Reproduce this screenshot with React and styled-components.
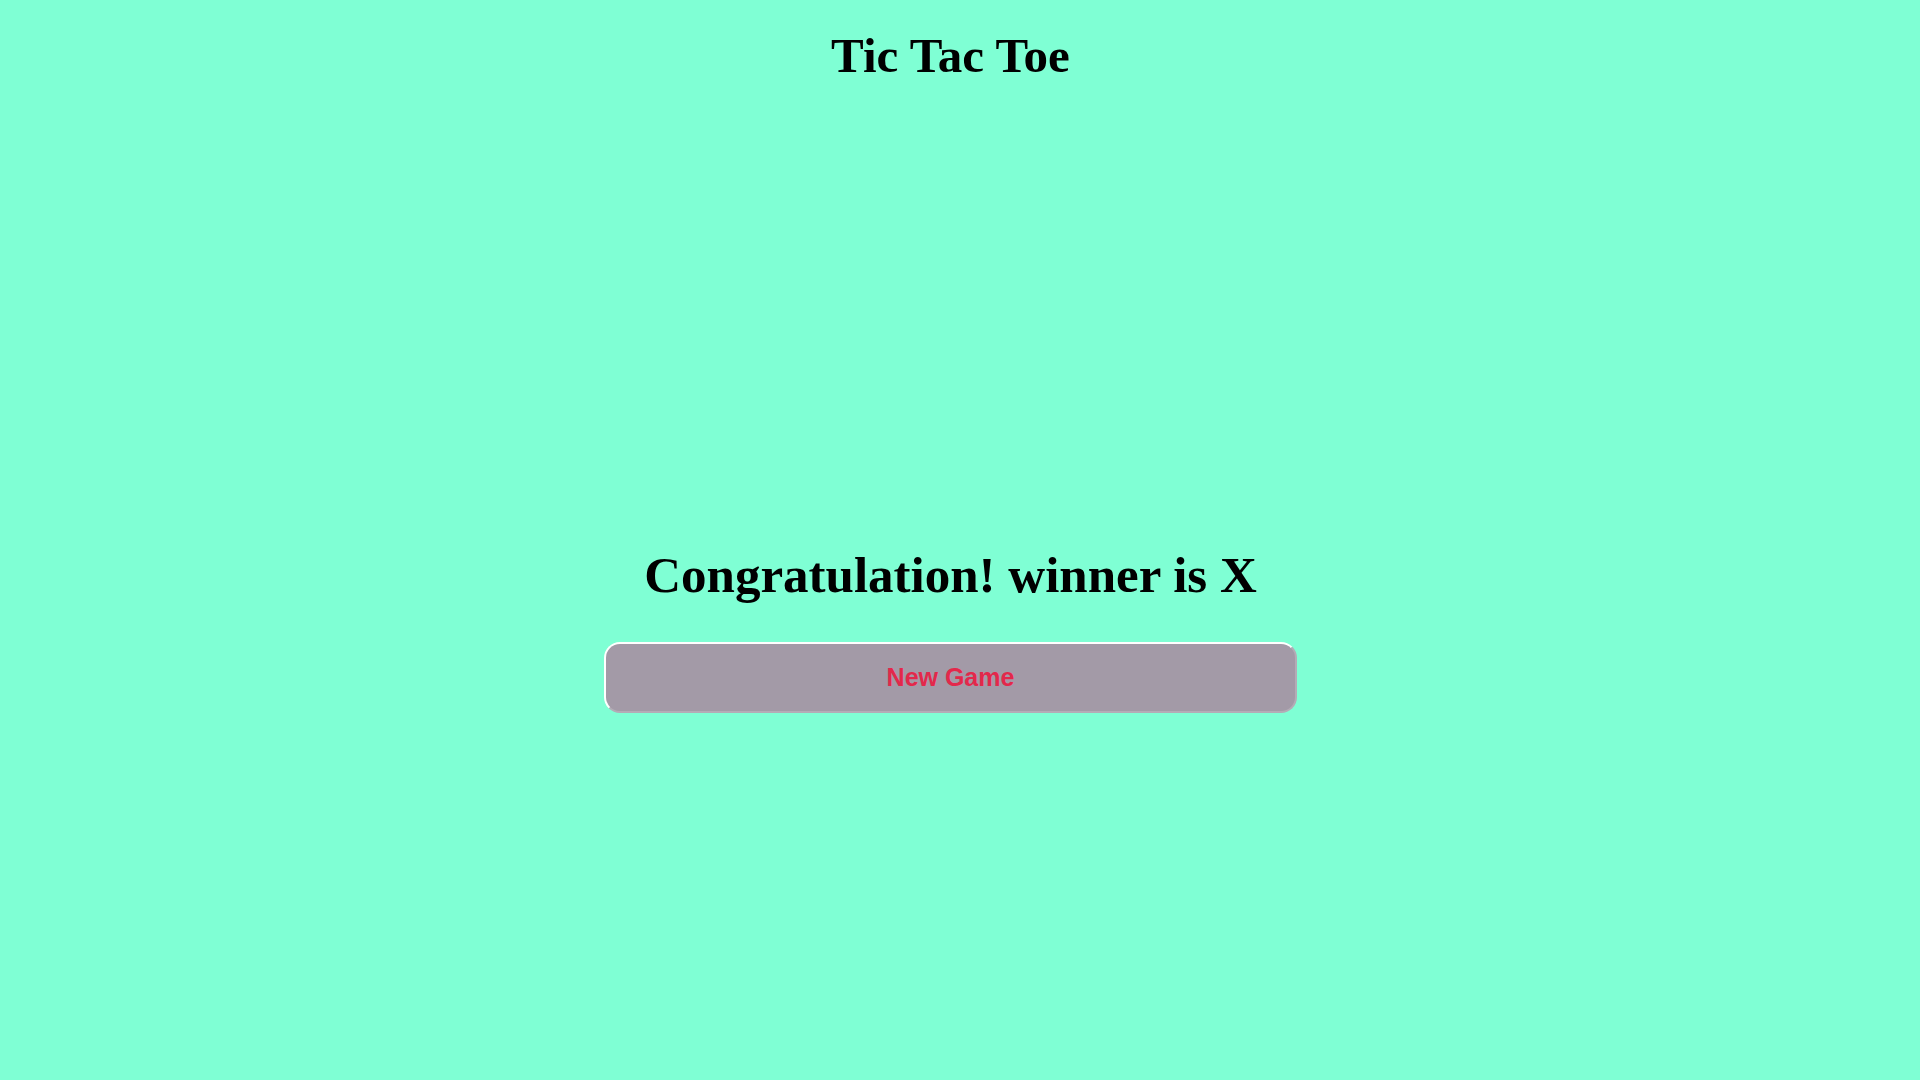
import styled, { createGlobalStyle } from 'styled-components'

const GlobalStyle = createGlobalStyle`
  html, body {
    margin: 0;
    padding: 0;
    background-color: aquamarine;
  }
`

const Container = styled.div`
  min-height: 1928px;
  padding-right: 19px;
  display: flex;
  flex-direction: column;
  align-items: center;
  font-family: 'Liberation Serif', 'Times New Roman', serif;
`
const Title = styled.h1`
  margin: 29px 0 0;
  font-size: 49px;
  font-weight: 700;
  line-height: 53px;
  color: #000;
`
const Board = styled.div`
  width: 100%;
  height: 465px;
`
const Winner = styled.h2`
  margin: 0;
  font-size: 51px;
  font-weight: 700;
  line-height: 57px;
  color: #000;
`
const Button = styled.button`
  margin-top: 38px;
  width: 693px;
  height: 71px;
  border: 2px solid;
  border-color: #ffffff #b4acb6 #b4acb6 #ffffff;
  border-radius: 16px;
  background-color: #a39aa7;
  color: #e3284b;
  font-family: 'Liberation Sans', Arial, sans-serif;
  font-size: 25px;
  font-weight: 700;
  cursor: pointer;
`

const App = () => {
  return (
    <>
      <GlobalStyle />
      <Container>
        <Title>Tic Tac Toe</Title>
        <Board />
        <Winner>Congratulation! winner is X</Winner>
        <Button>New Game</Button>
      </Container>
    </>
  )
}

export default App
